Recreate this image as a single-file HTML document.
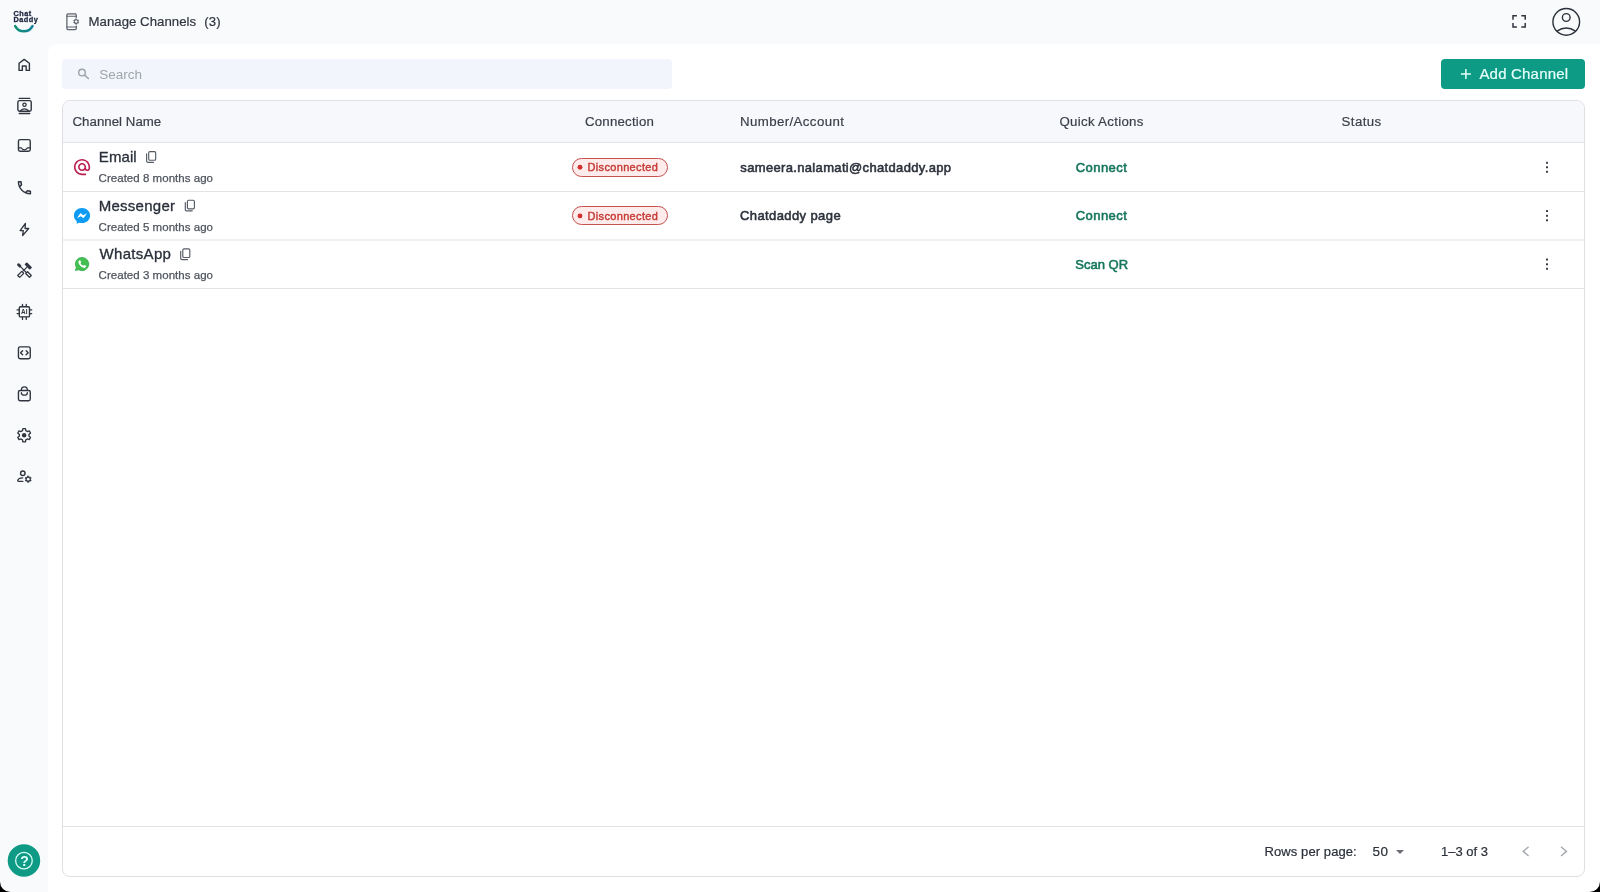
<!DOCTYPE html>
<html lang="en">
<head>
<meta charset="utf-8">
<title>Manage Channels</title>
<style>
*{box-sizing:border-box;margin:0;padding:0}
html,body{width:1600px;height:892px;overflow:hidden;background:#f9fafc}
body{position:relative;font-family:"Liberation Sans",sans-serif;color:#2b303a}
.abs{position:absolute}
.t{position:absolute;white-space:nowrap;line-height:20px;height:20px}
svg{position:absolute;overflow:visible}
#content{left:48px;top:44px;width:1552px;height:848px;background:#fff;border-top-left-radius:9px}
#search{left:62px;top:59px;width:610px;height:30px;background:#f3f5fc;border-radius:4px}
#addbtn{left:1441px;top:59px;width:144px;height:30px;background:#0e9b86;border-radius:4px}
#table{left:62px;top:100px;width:1523px;height:777px;border:1px solid #dfe0e4;border-radius:8px;background:#fff;overflow:hidden}
#thead{left:0;top:0;width:1521px;height:41px;background:#f7f8fb}
.hl{position:absolute;left:0;width:1521px;height:1px;background:#e2e3e6}
.th{font-size:13.25px;color:#3a3f49;-webkit-text-stroke:0.2px #3a3f49}
.nm{font-size:15px;color:#2a2f3a;-webkit-text-stroke:0.32px #2a2f3a}
.sub{font-size:11.5px;color:#4f545e;-webkit-text-stroke:0.25px #4f545e}
.badge{position:absolute;left:571.5px;width:96.5px;height:19px;border:1px solid #c6514d;border-radius:10px;background:#fdeceb}
.bt{font-size:11px;color:#c63a35;-webkit-text-stroke:0.4px #c63a35}
.acc{font-size:13px;color:#2d323d;-webkit-text-stroke:0.55px #2d323d}
.act{font-size:13px;color:#17775d;-webkit-text-stroke:0.58px #17775d}
.ft{font-size:13px;color:#2b303a;-webkit-text-stroke:0.2px #2b303a}
</style>
</head>
<body>
<div id="root" style="position:absolute;left:0;top:0;width:1600px;height:892px;will-change:transform">
<div id="content" class="abs"></div>

<!-- logo -->
<span class="t" id="lg1" style="left:13.5px;top:8.5px;font-size:7.3px;font-weight:bold;line-height:10px;height:10px;color:#1d2740;letter-spacing:0.5px;-webkit-text-stroke:0.3px #1d2740">Chat</span>
<span class="t" id="lg2" style="left:13.5px;top:15.2px;font-size:7.3px;font-weight:bold;line-height:10px;height:10px;color:#1d2740;letter-spacing:0.5px;-webkit-text-stroke:0.3px #1d2740">Daddy</span>
<svg style="left:0;top:0" width="48" height="44" viewBox="0 0 48 44">
  <defs><linearGradient id="sm" x1="0" x2="1" y1="0" y2="0"><stop offset="0" stop-color="#0f9070"/><stop offset="1" stop-color="#13809a"/></linearGradient></defs>
  <path d="M15.2 26.1A9.8 9.8 0 0 0 32.5 26.1" fill="none" stroke="url(#sm)" stroke-width="2.5" stroke-linecap="round"/>
</svg>

<!-- sidebar icons -->
<svg id="side" style="left:0;top:44px" width="48" height="848" viewBox="0 44 48 848" fill="none" stroke="#30353f" stroke-width="1.4" stroke-linecap="round" stroke-linejoin="round">
  <!-- home -->
  <path d="M19.05 70.4V63.2L24.2 59.35L29.4 63.2V70.4H26.15V66H22.35V70.4Z"/>
  <!-- contacts -->
  <path d="M19.2 98.45H29.8M19.2 113.5H29.8" stroke-width="1.3"/>
  <rect x="17.85" y="100.6" width="13.4" height="10.7" rx="1.7"/>
  <circle cx="24.5" cy="104.8" r="1.65" stroke-width="1.3"/>
  <path d="M20.2 111Q24.5 106.8 28.8 111" stroke-width="1.3"/>
  <!-- inbox -->
  <rect x="18.45" y="139.65" width="11.8" height="11.65" rx="1.7"/>
  <path d="M18.5 147.8H21.2Q22.3 149.9 24.35 149.9Q26.4 149.9 27.5 147.8H30.2" stroke-width="1.3"/>
  <!-- phone -->
  <g transform="translate(15.45 178.85) scale(0.748)" stroke="none" fill="#30353f"><path d="M6.54 5c.06.89.21 1.76.45 2.59l-1.2 1.2c-.41-1.2-.67-2.47-.76-3.79h1.51m9.86 12.02c.85.24 1.72.390 2.6.450v1.49c-1.32-.09-2.59-.35-3.8-.75l1.2-1.19M7.5 3H4c-.55 0-1 .45-1 1 0 9.39 7.61 17 17 17 .55 0 1-.45 1-1v-3.49c0-.55-.45-1-1-1-1.24 0-2.45-.2-3.57-.57-.1-.04-.21-.05-.31-.05-.26 0-.51.1-.71.29l-2.2 2.2c-2.83-1.45-5.15-3.76-6.59-6.59l2.2-2.2c.28-.28.36-.67.25-1.02C8.7 6.45 8.5 5.25 8.5 4c0-.55-.45-1-1-1z"/></g>
  <!-- bolt -->
  <path d="M25.4 223.5L20.1 230.6H23.3L22.6 235.7L28.7 228.5H25.1Z" stroke-width="1.3"/>
  <!-- tools -->
  <g>
    <g transform="translate(19.2 265.4) rotate(45)"><rect x="-2.3" y="-1.4" width="4.6" height="2.8" rx="1.1" fill="#30353f" stroke="none"/></g>
    <path d="M20.5 266.7L26.3 272.5" stroke-width="1.2"/>
    <g transform="translate(28.5 274.5) rotate(45)"><rect x="-2.7" y="-1.35" width="5.4" height="2.7" rx="0.4" stroke-width="1.3"/></g>
    <g transform="translate(28.3 266) rotate(45)"><rect x="-3.8" y="-1.7" width="7.6" height="3.4" rx="0.8" fill="#30353f" stroke="none"/></g>
    <path d="M25 264.2L26.8 262.8L27.8 265Z" fill="#30353f" stroke="none"/>
    <path d="M26.8 267.3L22.9 271.2" stroke-width="1.2"/>
    <g transform="translate(20.7 274.4) rotate(-45)"><rect x="-2.9" y="-1.4" width="5.8" height="2.8" rx="0.4" stroke-width="1.3"/></g>
  </g>
  <!-- AI chip -->
  <rect x="19.3" y="306.8" width="10.2" height="10.1" rx="1.2"/>
  <path d="M22.5 304.3V306.5M26.25 304.3V306.5M22.5 317.2V319.4M26.25 317.2V319.4M17.1 309.9H19M17.1 313.6H19M29.8 309.9H31.7M29.8 313.6H31.7" stroke-width="1.3"/>
  <text x="24.4" y="314" font-family="Liberation Sans, sans-serif" font-size="6.4" font-weight="bold" text-anchor="middle" fill="#30353f" stroke="none" letter-spacing="0.3">AI</text>
  <!-- code -->
  <rect x="18.45" y="346.9" width="11.8" height="11.9" rx="1.7"/>
  <path d="M22.6 350.8L20.6 352.8L22.6 354.8M26.15 350.8L28.15 352.8L26.15 354.8" stroke-width="1.35"/>
  <!-- bag -->
  <rect x="18.45" y="390.5" width="11.8" height="10.2" rx="1.6"/>
  <path d="M21.35 390.4A3 3.5 0 0 1 27.35 390.4M21.35 392.7A3 2.5 0 0 0 27.35 392.7" stroke-width="1.3"/>
  <!-- gear -->
  <path d="M22.89 428.62 L25.41 428.62 L25.82 430.7 L27.26 431.53 L29.26 430.84 L30.52 433.03 L28.93 434.42 L28.93 436.08 L30.52 437.47 L29.26 439.66 L27.26 438.97 L25.82 439.8 L25.41 441.88 L22.89 441.88 L22.48 439.8 L21.04 438.97 L19.04 439.66 L17.78 437.47 L19.37 436.08 L19.37 434.42 L17.78 433.03 L19.04 430.84 L21.04 431.53 L22.48 430.7Z" stroke-width="1.35"/>
  <circle cx="24.15" cy="435.25" r="2.2" fill="#30353f" stroke="none"/>
  <!-- manage accounts -->
  <circle cx="22.8" cy="473.3" r="2.25"/>
  <path d="M22.7 477.9C20.5 478 18.2 478.9 17.75 480.4Q17.6 481.3 18.6 481.3H22.9" stroke-width="1.3"/>
  <path d="M27.52 476.17 L28.88 476.17 L28.94 477.02 L29.71 477.47 L30.48 477.1 L31.16 478.27 L30.46 478.75 L30.46 479.65 L31.16 480.13 L30.48 481.3 L29.71 480.93 L28.94 481.38 L28.88 482.23 L27.52 482.23 L27.46 481.38 L26.69 480.93 L25.92 481.3 L25.24 480.13 L25.94 479.65 L25.94 478.75 L25.24 478.27 L25.92 477.1 L26.69 477.47 L27.46 477.02Z" stroke-width="0.8" fill="#30353f"/>
  <circle cx="28.2" cy="479.2" r="1.35" fill="#f9fafc" stroke="none"/>
</svg>

<!-- header -->
<svg id="hdricon" style="left:60px;top:8px" width="24" height="28" viewBox="60 8 24 28" fill="none" stroke="#5d626c" stroke-width="1.25" stroke-linecap="round" stroke-linejoin="round">
  <path d="M76.25 17.4V14.9Q76.25 13.8 75.15 13.8H68Q66.9 13.8 66.9 14.9V28.4Q66.9 29.5 68 29.5H75.15Q76.25 29.5 76.25 28.4V26"/>
  <path d="M66.9 16.2H76.25M66.9 27H76.25" stroke-width="1.1"/>
  <path d="M75.63 19.06 L76.77 19.06 L76.81 19.8 L77.45 20.17 L78.11 19.84 L78.68 20.82 L78.06 21.23 L78.06 21.97 L78.68 22.38 L78.11 23.36 L77.45 23.03 L76.81 23.4 L76.77 24.14 L75.63 24.14 L75.59 23.4 L74.95 23.03 L74.29 23.36 L73.72 22.38 L74.34 21.97 L74.34 21.23 L73.72 20.82 L74.29 19.84 L74.95 20.17 L75.59 19.8Z" stroke-width="0.8" fill="#5d626c"/>
  <circle cx="76.2" cy="21.6" r="1.25" fill="#f9fafc" stroke="none"/>
</svg>
<span class="t" id="title" style="left:88.6px;top:12.2px;font-size:13.2px;color:#30353f;letter-spacing:0.03px;-webkit-text-stroke:0.2px #30353f">Manage Channels</span>
<span class="t" id="count" style="left:204.3px;top:12.2px;font-size:13.2px;color:#30353f;letter-spacing:0.15px;-webkit-text-stroke:0.2px #30353f">(3)</span>

<svg id="fsicon" style="left:1510px;top:13px" width="18" height="18" viewBox="1510 13 18 18" fill="none" stroke="#30353f" stroke-width="1.5">
  <path d="M1513 19.7V15.8H1516.9M1521.3 15.8H1525.2V19.7M1525.2 23.1V27H1521.3M1516.9 27H1513V23.1"/>
</svg>
<svg id="avatar" style="left:1550px;top:6px" width="32" height="32" viewBox="1550 6 32 32" fill="none" stroke="#2b303a" stroke-width="1.4">
  <circle cx="1566.25" cy="21.85" r="13.35"/>
  <circle cx="1566.25" cy="17.5" r="3.85"/>
  <path d="M1557 31.2Q1566.25 24.8 1575.5 31.2"/>
</svg>

<!-- search -->
<div id="search" class="abs"></div>
<svg id="sicon" style="left:76px;top:66px" width="16" height="16" viewBox="76 66 16 16" fill="none" stroke="#9ba1ab" stroke-width="1.4" stroke-linecap="round">
  <circle cx="82" cy="72.6" r="3.3"/><path d="M84.5 75.1L88.4 78.5"/>
</svg>
<span class="t" id="stext" style="left:99.3px;top:64.6px;font-size:13.5px;color:#a0a5af">Search</span>

<!-- add button -->
<div id="addbtn" class="abs"></div>
<svg id="plus" style="left:1458px;top:66px" width="16" height="16" viewBox="1458 66 16 16" stroke="#e2fffa" stroke-width="1.5" fill="none"><path d="M1465.9 68.9V78.9M1460.9 73.9H1470.9"/></svg>
<span class="t" id="addtext" style="left:1479.4px;top:64.1px;font-size:15px;color:#e6fffb;letter-spacing:0.2px;-webkit-text-stroke:0.2px #e6fffb">Add Channel</span>

<!-- table -->
<div id="table" class="abs">
  <div id="thead" class="abs"></div>
  <div class="hl" style="top:41px"></div>
  <div class="hl" style="top:90px"></div>
  <div class="hl" style="top:138px;height:2px;background:#f0f1f3"></div>
  <div class="hl" style="top:187px"></div>
  <div class="hl" style="top:725px"></div>
</div>

<span class="t th" id="th1" style="left:72.5px;top:112.3px;letter-spacing:0.03px">Channel Name</span>
<span class="t th" id="th2" style="left:585px;top:112.3px;letter-spacing:0.21px">Connection</span>
<span class="t th" id="th3" style="left:740px;top:112.3px;letter-spacing:0.4px">Number/Account</span>
<span class="t th" id="th4" style="left:1059.5px;top:112.3px;letter-spacing:0.3px">Quick Actions</span>
<span class="t th" id="th5" style="left:1341.6px;top:112.3px;letter-spacing:0.4px">Status</span>

<!-- rows -->
<svg id="rowicons" style="left:62px;top:142px" width="1523" height="150" viewBox="62 142 1523 150">
  <!-- @ email -->
  <g transform="translate(72.35 157.35) scale(0.808)" fill="#be2050"><path d="M12 2C6.48 2 2 6.48 2 12s4.48 10 10 10h5v-2h-5c-4.34 0-8-3.66-8-8s3.66-8 8-8 8 3.66 8 8v1.43c0 .79-.71 1.57-1.5 1.57s-1.5-.78-1.5-1.57V12c0-2.76-2.24-5-5-5s-5 2.24-5 5 2.24 5 5 5c1.38 0 2.64-.56 3.54-1.47.65.89 1.77 1.47 2.96 1.47 1.97 0 3.5-1.6 3.5-3.57V12c0-5.52-4.48-10-10-10zm0 13c-1.66 0-3-1.34-3-3s1.34-3 3-3 3 1.34 3 3-1.34 3-3 3z"/></g>
  <!-- messenger -->
  <path d="M82 207.9C77.45 207.9 73.9 211.2 73.9 215.5C73.9 217.8 74.95 219.85 76.7 221.2L76.85 223.8L79.3 222.65C80.15 222.9 81.05 223.05 82 223.05C86.55 223.05 90.1 219.8 90.1 215.5C90.1 211.2 86.55 207.9 82 207.9Z" fill="#0d9bf4"/>
  <path d="M76.9 218.2L80.5 213.1L83.2 215.2L87.1 213.2L83.5 218.3L80.7 216.3Z" fill="#fff"/>
  <!-- whatsapp -->
  <path d="M82 257.4A6.65 6.65 0 0 0 76.3 267.4L75.4 270.6L78.7 269.75A6.65 6.65 0 1 0 82 257.4Z" fill="#43c052" stroke="#2fa445" stroke-width="0.7" stroke-linejoin="round"/>
  <path d="M79.3 260.4C79.6 260.1 80.2 260.1 80.4 260.5L81.1 262C81.2 262.3 81.1 262.6 80.9 262.8L80.5 263.3C81.1 264.5 82 265.3 83.2 265.8L83.7 265.2C83.9 265 84.2 264.9 84.5 265L85.9 265.7C86.3 265.9 86.3 266.4 86.1 266.8C85.6 267.7 84.6 268.1 83.6 267.8C81 267.1 79 265.1 78.4 262.6C78.2 261.7 78.6 260.9 79.3 260.4Z" fill="#fff"/>
  <g transform="translate(0 0)" fill="none" stroke="#565b65" stroke-width="1.15" stroke-linejoin="round" stroke-linecap="round"><rect x="148.7" y="151.6" width="7" height="8.6" rx="1.3"/><path d="M146.6 153.9V161.1Q146.6 162.3 147.8 162.3H153.5"/></g>
  <g transform="translate(38.7 48.6)" fill="none" stroke="#565b65" stroke-width="1.15" stroke-linejoin="round" stroke-linecap="round"><rect x="148.7" y="151.6" width="7" height="8.6" rx="1.3"/><path d="M146.6 153.9V161.1Q146.6 162.3 147.8 162.3H153.5"/></g>
  <g transform="translate(34.1 97.3)" fill="none" stroke="#565b65" stroke-width="1.15" stroke-linejoin="round" stroke-linecap="round"><rect x="148.7" y="151.6" width="7" height="8.6" rx="1.3"/><path d="M146.6 153.9V161.1Q146.6 162.3 147.8 162.3H153.5"/></g>
  <g fill="#33373f"><rect x="1546" y="161.7" width="2" height="2" rx="0.5"/><rect x="1546" y="166.25" width="2" height="2" rx="0.5"/><rect x="1546" y="170.8" width="2" height="2" rx="0.5"/><rect x="1546" y="210.1" width="2" height="2" rx="0.5"/><rect x="1546" y="214.65" width="2" height="2" rx="0.5"/><rect x="1546" y="219.2" width="2" height="2" rx="0.5"/><rect x="1546" y="258.6" width="2" height="2" rx="0.5"/><rect x="1546" y="263.15" width="2" height="2" rx="0.5"/><rect x="1546" y="267.7" width="2" height="2" rx="0.5"/></g>
</svg>

<span class="t nm" id="n1" style="left:98.8px;top:147.3px;letter-spacing:0.08px">Email</span>
<span class="t sub" id="s1" style="letter-spacing:0.03px;left:98.6px;top:168.1px">Created 8 months ago</span>
<span class="t nm" id="n2" style="left:98.7px;top:196.1px;letter-spacing:0.27px">Messenger</span>
<span class="t sub" id="s2" style="letter-spacing:0.03px;left:98.6px;top:216.7px">Created 5 months ago</span>
<span class="t nm" id="n3" style="left:99.5px;top:244.4px;letter-spacing:0.32px">WhatsApp</span>
<span class="t sub" id="s3" style="letter-spacing:0.03px;left:98.6px;top:265.4px">Created 3 months ago</span>

<div class="badge" style="top:157.5px"></div>
<span class="t bt" id="b1" style="left:587.5px;top:157.3px;letter-spacing:0.34px">Disconnected</span>
<div class="badge" style="top:206.1px"></div>
<span class="t bt" id="b2" style="left:587.5px;top:205.9px;letter-spacing:0.34px">Disconnected</span>

<svg id="bdots" style="left:570px;top:150px" width="20" height="80" viewBox="570 150 20 80"><circle cx="580" cy="167.25" r="2.45" fill="#d32f2f"/><circle cx="580" cy="215.9" r="2.45" fill="#d32f2f"/></svg>
<span class="t acc" id="a1" style="left:740.3px;top:157.5px;letter-spacing:0.34px">sameera.nalamati@chatdaddy.app</span>
<span class="t acc" id="a2" style="left:740px;top:206.1px;letter-spacing:0.4px">Chatdaddy page</span>

<span class="t act" id="c1" style="left:1075.7px;top:157.6px;letter-spacing:0.45px">Connect</span>
<span class="t act" id="c2" style="left:1075.7px;top:206.3px;letter-spacing:0.45px">Connect</span>
<span class="t act" id="c3" style="left:1075.3px;top:254.9px;letter-spacing:0px">Scan QR</span>

<!-- footer -->
<span class="t ft" id="f1" style="left:1264.6px;top:841.7px;letter-spacing:0.08px">Rows per page:</span>
<span class="t ft" id="f2" style="left:1372.5px;top:841.7px;font-size:13.5px;letter-spacing:0.5px">50</span>
<span class="t ft" id="f3" style="left:1441px;top:841.7px">1–3 of 3</span>
<svg id="footicons" style="left:1390px;top:840px" width="190" height="24" viewBox="1390 840 190 24">
  <path d="M1396 849.9H1404L1400 854Z" fill="#6a6e76"/>
  <path d="M1528.6 846.8L1523.2 851.4L1528.6 856" fill="none" stroke="#a8abb1" stroke-width="1.5"/>
  <path d="M1561 846.8L1566.4 851.4L1561 856" fill="none" stroke="#a8abb1" stroke-width="1.5"/>
</svg>

<!-- help fab -->
<svg id="fab" style="left:0;top:836px" width="48" height="56" viewBox="0 836 48 56">
  <circle cx="23.95" cy="860.4" r="16.25" fill="#0f9a85"/>
  <circle cx="23.95" cy="860.65" r="8.3" fill="none" stroke="#d9fff8" stroke-width="1.3"/>
  <path d="M0 881.5A10.5 10.5 0 0 0 10.5 892H0Z" fill="#000"/>
</svg>
<span class="t" id="q" style="left:20.3px;top:850.6px;font-size:14px;color:#d9fff8;font-weight:bold">?</span>
<svg style="left:1584px;top:876px" width="16" height="16" viewBox="1584 876 16 16"><path d="M1600 881.5A10.5 10.5 0 0 1 1589.5 892H1600Z" fill="#000"/></svg>
</div>
</body>
</html>
